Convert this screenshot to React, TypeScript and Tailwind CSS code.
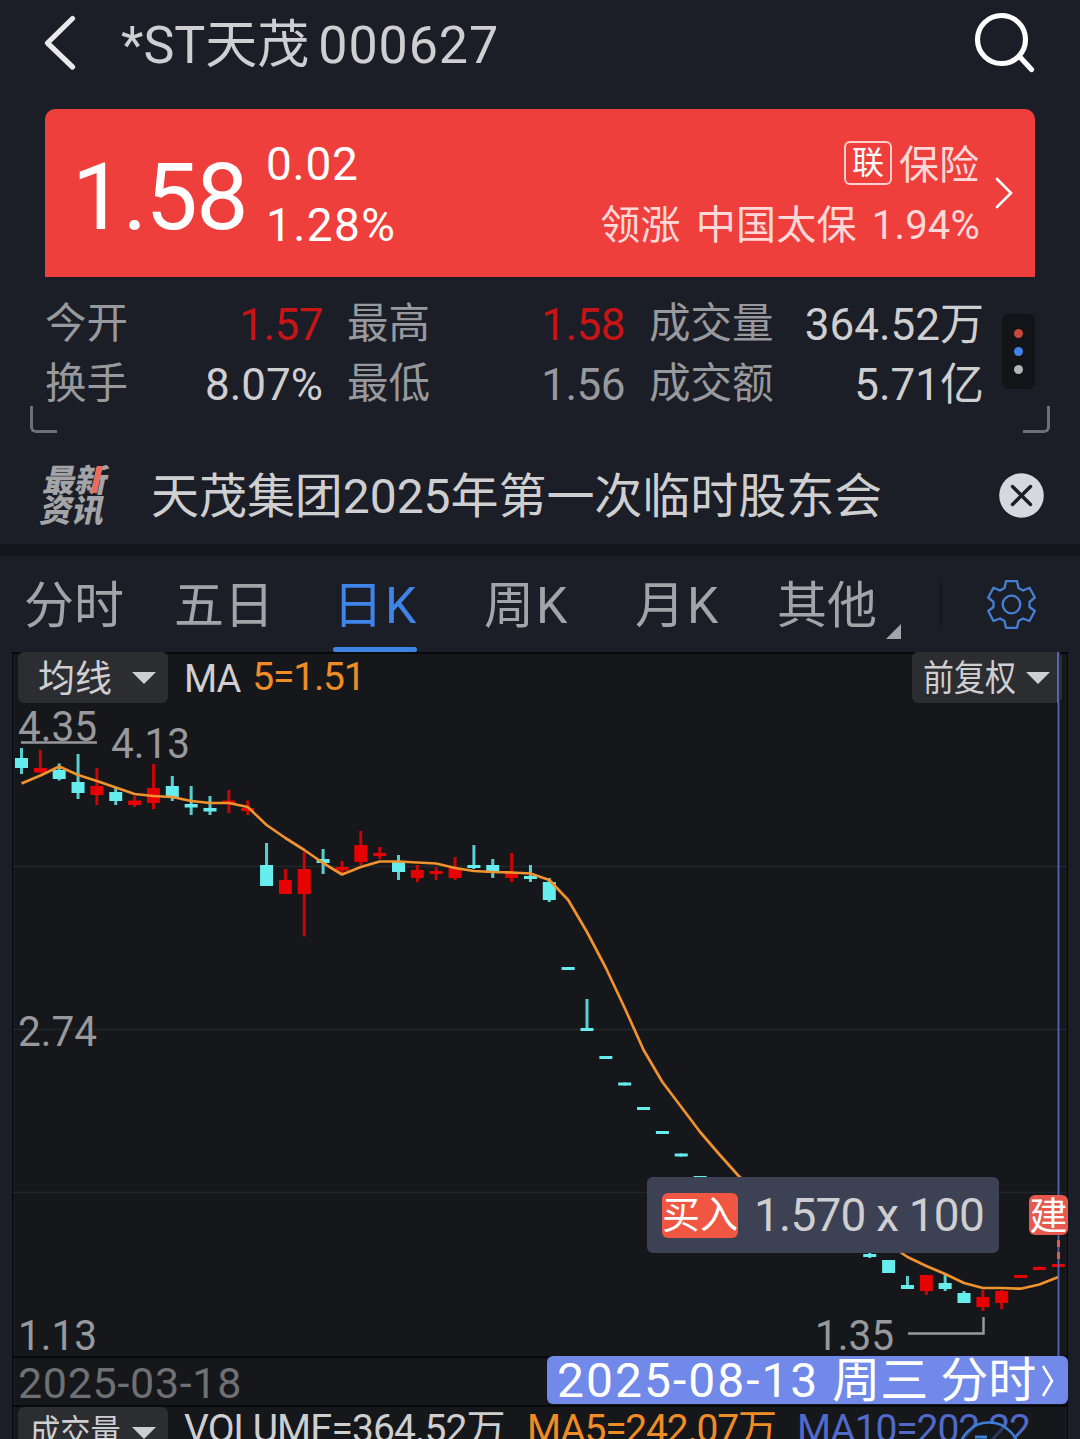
import { useState } from "react";
import type { ReactNode } from "react";

type Candle = {
  up: boolean;
  high: number;
  low: number;
  top: number;
  bottom: number;
};

const FIRST_X = 21.5;
const STEP = 18.85;

// [direction, high, low, body top, body bottom], null = covered by the trade tooltip
const RAW: ([0 | 1, number, number, number, number] | null)[] = [
  [0, 748, 774, 758, 768],
  [1, 750, 773, 768, 772.5],
  [0, 763.5, 780.5, 770, 779],
  [0, 754, 799, 782, 793],
  [1, 768, 805, 786, 795],
  [0, 788, 805, 792, 801],
  [1, 796, 807, 800.5, 805],
  [1, 764, 809, 788, 803],
  [0, 776, 801, 786, 797],
  [0, 786, 815, 804, 807.5],
  [0, 796, 815, 808, 811.5],
  [1, 790, 813, 800.5, 804],
  [1, 800.5, 815, 808, 811],
  [0, 843, 886, 865, 886],
  [1, 869, 894, 880, 894],
  [1, 852, 936.5, 869, 894],
  [0, 849, 874, 859, 863],
  [1, 861, 873, 867, 870.5],
  [1, 831, 865, 845, 862],
  [1, 847, 859, 853, 856],
  [0, 855, 880, 862, 872],
  [1, 865, 882, 870, 878],
  [1, 867, 880, 871, 874],
  [1, 857, 880, 868, 878],
  [0, 845, 869, 865, 868],
  [0, 859, 878, 865, 873],
  [1, 853, 882, 872, 878],
  [0, 865, 882, 876, 879],
  [0, 878, 902, 882, 900],
  [0, 967, 970, 967, 970],
  [0, 999, 1030, 1028, 1031],
  [0, 1056, 1059, 1056, 1059],
  [0, 1082.5, 1085.5, 1082.5, 1085.5],
  [0, 1107, 1110, 1107, 1110],
  [0, 1131, 1134, 1131, 1134],
  [0, 1153.5, 1156.5, 1153.5, 1156.5],
  [0, 1176, 1179, 1176, 1179],
  null,
  null,
  null,
  null,
  null,
  null,
  null,
  null,
  [0, 1250, 1258, 1254, 1257],
  [0, 1260, 1273, 1260, 1273],
  [0, 1276, 1289, 1285, 1289],
  [1, 1275, 1295, 1275, 1291],
  [0, 1275, 1291, 1283, 1289],
  [0, 1291, 1303, 1293, 1303],
  [1, 1290, 1311, 1297, 1307],
  [1, 1290, 1309, 1291, 1303],
  [1, 1275, 1278, 1275, 1278],
  [1, 1266.5, 1269.5, 1267, 1270],
  [1, 1264, 1267, 1264, 1267],
];

const CANDLES: (Candle | null)[] = RAW.map((row) =>
  row ? { up: row[0] === 1, high: row[1], low: row[2], top: row[3], bottom: row[4] } : null
);

const MA5 = [
  783.5, 775.5, 766.5, 775, 781, 787.5, 794, 796, 797, 801, 803, 803, 807, 825, 838, 850, 863, 874.5, 867, 861.5,
  861.5, 862.5, 863.5, 868, 871, 872, 872.5, 873.5, 880, 900, 932, 968, 1008, 1050, 1082, 1107, 1132, 1154, 1175,
  1193, 1205, 1213, 1220, 1227, 1233, 1238, 1244, 1257, 1266, 1274, 1283, 1288, 1288, 1288.7, 1284.5, 1277,
];

const PRICE_LABELS = [
  { text: "4.35", x: 18, y: 741 },
  { text: "4.13", x: 111, y: 758 },
  { text: "2.74", x: 18, y: 1046 },
  { text: "1.13", x: 18, y: 1350 },
  { text: "1.35", x: 815, y: 1350 },
];

const TABS = [
  { label: "分时", className: "w-[150px]" },
  { label: "五日", className: "w-[159px]" },
  { label: "日K", className: "w-[151px] tracking-[2px]" },
  { label: "周K", className: "w-[151px] tracking-[2px]" },
  { label: "月K", className: "w-[142px] tracking-[2px]" },
  { label: "其他", className: "w-[109px]" },
];

export default function App() {
  return (
    <div className="flex h-[1439px] w-[1080px] flex-col overflow-hidden bg-[#1b1e26] font-['Roboto','Noto_Sans_CJK_SC',sans-serif] leading-none whitespace-nowrap text-[#cfcfd1]">
      <Header />
      <QuoteCard />
      <Stats />
      <News />
      <div className="h-3 shrink-0 bg-[#15161b]" />
      <PeriodTabs />
      <div className="mx-3 flex flex-1 flex-col border-x border-[#08090c] bg-[#15171b]">
        <PriceChart />
        <DateRow />
        <VolumeRow />
      </div>
    </div>
  );
}

function Header() {
  return (
    <header className="flex h-[109px] shrink-0 items-start pt-3 pr-11 pl-11">
      <svg className="mt-[2px] h-[58px] w-[34px]" viewBox="0 0 34 58" fill="none">
        <path d="M28.500 4.500L3.500 29L28.500 53" stroke="#e9e9eb" strokeWidth="5.200" strokeLinecap="round" strokeLinejoin="round" />
      </svg>
      <h1 className="ml-[43px] flex h-16 items-center pt-[3px] text-[52px]">
        <span>*ST天茂</span>
        <span className="ml-[9px] tracking-[0.9px]">000627</span>
      </h1>
      <svg className="ml-auto h-[62px] w-[62px]" viewBox="0 0 62 62" fill="none" stroke="#fff" strokeWidth="5.200">
        <circle cx="27.500" cy="27.500" r="24" />
        <path d="M45.500 44.500L57.500 57.500" strokeLinecap="round" />
      </svg>
    </header>
  );
}

function QuoteCard() {
  return (
    <section className="mx-[45px] flex h-[168px] shrink-0 items-center rounded-t-[10px] bg-[#ef3f3d] text-white">
      <span className="ml-[27px] w-[194px] pt-2 text-[93px] tracking-[-1.6px]">1.58</span>
      <div className="flex flex-col gap-[15px] pt-[3px] text-[46px]">
        <span className="tracking-[0.7px]">0.02</span>
        <span className="tracking-[1.4px]">1.28%</span>
      </div>
      <div className="ml-auto flex flex-col items-end gap-[20px] pt-[6px] text-[40px] text-[#ffd9d8]">
        <div className="flex h-10 items-center gap-[7px]">
          <span className="-mt-[7px] flex h-11 w-12 items-center justify-center rounded-md border-2 border-[#ffd0cf] pt-px text-[32px] text-white">联</span>
          <span className="pr-px">保险</span>
        </div>
        <span className="tracking-[0.2px] [word-spacing:5px]">领涨 中国太保 1.94%</span>
      </div>
      <svg className="mr-[21px] ml-[14px] h-[34px] w-5" viewBox="0 0 20 34" fill="none">
        <path d="M3 3L17 17L3 31" stroke="#fff" strokeWidth="2.600" strokeLinecap="round" />
      </svg>
    </section>
  );
}

function Stats() {
  return (
    <section className="relative flex h-[156px] shrink-0 pt-[18px] pl-[45px]">
      <div className="grid h-[120px] grid-cols-[83px_195px_24px_83px_195px_24px_126px_209px] grid-rows-2 items-center text-[44px]">
        <StatLabel>今开</StatLabel>
        <StatValue className="tracking-[-0.5px] text-[#c81414]">1.57</StatValue>
        <i />
        <StatLabel>最高</StatLabel>
        <StatValue className="tracking-[-0.5px] text-[#c81414]">1.58</StatValue>
        <i />
        <StatLabel>成交量</StatLabel>
        <StatValue className="text-[#cfcfd1]">364.52万</StatValue>
        <StatLabel>换手</StatLabel>
        <StatValue className="text-[#cfcfd1]">8.07%</StatValue>
        <i />
        <StatLabel>最低</StatLabel>
        <StatValue className="tracking-[-0.5px] text-[#98999d]">1.56</StatValue>
        <i />
        <StatLabel>成交额</StatLabel>
        <StatValue className="text-[#cfcfd1]">5.71亿</StatValue>
      </div>
      <div className="mt-[19px] ml-[18px] flex h-[75px] w-[33px] flex-col items-center justify-center gap-[9px] rounded-md bg-[#131418]">
        <span className="size-[9px] rounded-full bg-[#c34a3c]" />
        <span className="size-[9px] rounded-full bg-[#3f84ea]" />
        <span className="size-[9px] rounded-full bg-[#b4b4b8]" />
      </div>
      <span className="absolute bottom-0 left-[30px] h-[27px] w-[27px] rounded-bl-md border-b-[3px] border-l-[3px] border-[#6e6f74]" />
      <span className="absolute right-[30px] bottom-0 h-[27px] w-[27px] rounded-br-md border-r-[3px] border-b-[3px] border-[#6e6f74]" />
    </section>
  );
}

function StatLabel({ children }: { children: ReactNode }) {
  return <span className="pb-[2px] text-[41.500px] text-[#98999d]">{children}</span>;
}

function StatValue({ className, children }: { className: string; children: ReactNode }) {
  return <span className={`justify-self-end ${className}`}>{children}</span>;
}

function News() {
  return (
    <section className="flex h-[111px] shrink-0 items-center pt-[14px] pr-9 pl-[38px]">
      <div className="relative flex w-[72px] flex-col pt-px text-[32px] font-black text-[#a3a4a7]">
        <span className="origin-bottom-left -skew-x-12 pl-[3px] leading-[30px]">最新</span>
        <span className="origin-bottom-left -skew-x-12 leading-[30px]">资讯</span>
        <span className="absolute top-px left-[56px] h-[27px] w-[6px] -skew-x-12 bg-[#ee6a5b]" />
      </div>
      <span className="ml-[41px] pt-[3px] text-[48px] tracking-[-0.05px]">天茂集团2025年第一次临时股东会</span>
      <svg className="ml-auto size-[45px]" viewBox="0 0 45 45">
        <circle cx="22.500" cy="22.500" r="22.300" fill="#d7d8dd" />
        <path d="M13.500 13.500L31.500 31.500M31.500 13.500L13.500 31.500" stroke="#1b1e26" strokeWidth="3.400" strokeLinecap="round" />
      </svg>
    </section>
  );
}

function PeriodTabs() {
  const [active, setActive] = useState("日K");

  return (
    <nav className="flex h-24 shrink-0 pl-6 text-[50px]">
      {TABS.map((tab) => (
        <button
          key={tab.label}
          type="button"
          onClick={() => setActive(tab.label)}
          className={`relative flex h-full cursor-pointer items-center pt-[3px] text-left ${tab.className} ${
            tab.label === active ? "text-[#3f84e8]" : "text-[#a3a4a7]"
          }`}
        >
          {tab.label}
          {tab.label === active ? <span className="absolute bottom-0 left-0 h-[5px] w-[84px] rounded-sm bg-[#3f84e0]" /> : null}
        </button>
      ))}
      <svg className="mt-[68px] size-[15px]" viewBox="0 0 15 15">
        <path d="M15 0V15H0Z" fill="#a3a4a7" />
      </svg>
      <span className="mt-[25px] ml-[39px] h-[46px] w-[2px] bg-[#15171b]" />
      <svg className="mt-6 ml-[45px] size-[49px]" viewBox="0 0 49 49" fill="none" stroke="#4580d2" strokeWidth="2.300" strokeLinejoin="round">
        <path d="M19 1.200H30L31.500 8L36 10.500L42.500 7.800L47.800 17.500L42.500 22V27L47.800 31L42.500 41L36 38.500L31.500 41L30 47.800H19L17.500 41L13 38.500L6.500 41L1.200 31L6.500 27V22L1.200 17.500L6.500 7.800L13 10.500L17.500 8Z" />
        <circle cx="24.500" cy="24.500" r="8.800" />
      </svg>
    </nav>
  );
}

function PriceChart() {
  const line = MA5.map((y, index) => `${(FIRST_X + index * STEP).toFixed(1)},${y}`).join(" ");

  return (
    <div className="relative h-[704px] shrink-0">
      <svg className="-mx-px h-[704px] w-[1056px] overflow-visible" viewBox="12 652 1056 704">
        <path d="M12 653H1068" stroke="#08090c" strokeWidth="2" />
        <path d="M13 866.500H1067M13 1029.500H1067M13 1192.500H1067" stroke="#22252a" strokeWidth="1.300" />
        {CANDLES.map((candle, index) => {
          if (!candle) return null;
          const x = FIRST_X + index * STEP;
          const fill = candle.up ? "#e60202" : "#66eeee";
          return (
            <g key={index} fill={fill}>
              <rect x={x - 1.5} y={candle.high} width="3" height={candle.low - candle.high} opacity="0.850" />
              <rect x={x - 6.5} y={candle.top} width="13" height={candle.bottom - candle.top} />
            </g>
          );
        })}
        <polyline points={line} fill="none" stroke="#f0922e" strokeWidth="2.700" strokeLinejoin="round" />
        <path d="M21 742.500H97" stroke="#98999c" strokeWidth="2.500" />
        <path d="M908 1333.500H983.500V1317" fill="none" stroke="#98999c" strokeWidth="2.500" />
        <path d="M1058.500 652V1356" stroke="#5266b4" strokeWidth="1.800" />
        <path d="M1058.500 1240V1247M1058.500 1252V1259" stroke="#dc5b50" strokeWidth="3" />
        {PRICE_LABELS.map((label) => (
          <text key={label.text} x={label.x} y={label.y} fill="#98999c" fontSize="43" textLength="79" lengthAdjust="spacingAndGlyphs">
            {label.text}
          </text>
        ))}
      </svg>

      <div className="absolute top-0 left-[5px] flex h-[51px] items-center">
        <Dropdown className="pl-[20px]">
          <span className="pt-[3px] text-[37px]">均线</span>
        </Dropdown>
        <span className="ml-4 pt-[3px] text-[38px] tracking-[-1px]">MA</span>
        <span className="ml-3 text-[39px] tracking-[-1.2px] text-[#f08c26]">5=1.51</span>
      </div>
      <div className="absolute top-0 right-[5px]">
        <Dropdown className="pl-[11px]">
          <span className="w-[93px] origin-left scale-x-[.86] pt-[3px] text-[36px]">前复权</span>
        </Dropdown>
      </div>
      <span className="absolute top-0 right-[8px] h-[51px] w-[2px] bg-[#5266b4]" />

      <div className="absolute top-[525px] left-[634px] flex h-[76px] w-[352px] items-center rounded-md bg-[#3d4154] pl-[15px]">
        <span className="flex h-[45px] w-[76px] items-center justify-center rounded-md bg-[#f05641] text-[38px] text-white">买入</span>
        <span className="ml-4 text-[46px] tracking-[-0.8px]">1.570 x 100</span>
      </div>
      <span className="absolute top-[543px] -right-px flex h-10 w-[39px] items-center justify-center rounded-md bg-[#e8584c] pt-px text-[38px] text-white">
        建
      </span>
    </div>
  );
}

function Dropdown({ className, children }: { className: string; children: ReactNode }) {
  return (
    <button
      type="button"
      className={`flex h-[51px] w-[150px] shrink-0 cursor-pointer items-center justify-between rounded-md bg-[#2c2d31] pr-3 ${className}`}
    >
      {children}
      <svg className="h-3 w-6 shrink-0" viewBox="0 0 24 12">
        <path d="M0 0H24L12 12Z" fill="#cfcfd1" />
      </svg>
    </button>
  );
}

function DateRow() {
  return (
    <div className="-mr-px flex h-[51px] shrink-0 justify-between border-y-2 border-[#08090c]">
      <span className="flex items-center pt-[3px] pl-[5px] text-[43px] tracking-[0.7px] text-[#6f7073]">2025-03-18</span>
      <button type="button" className="-mt-[2px] flex h-12 w-[521px] cursor-pointer items-center rounded-md bg-[#7189e9] pt-[2px] pl-[10px] text-[48px] text-white">
        <span className="tracking-[2px]">2025-08-13</span>
        <span className="ml-[13px]">周三 分时</span>
        <svg className="ml-[5px] h-8 w-[14px]" viewBox="0 0 14 32" fill="none">
          <path d="M2 1L11 16L2 31" stroke="#fff" strokeWidth="2.500" />
        </svg>
      </button>
    </div>
  );
}

function VolumeRow() {
  return (
    <div className="relative flex h-8 overflow-hidden">
      <div className="flex h-[51px] shrink-0 items-center pl-[5px] text-[39px]">
        <Dropdown className="pl-[12px]">
          <span className="w-[93px] origin-left scale-x-[.84] pt-[3px] text-[36px]">成交量</span>
        </Dropdown>
        <span className="ml-4 w-[343px] pb-[7px] tracking-[-0.9px]">VOLUME=364.52万</span>
        <span className="w-[270px] pb-[7px] tracking-[-1.2px] text-[#f08c26]">MA5=242.07万</span>
        <span className="pb-[7px] tracking-[-1.1px] text-[#5169c9]">MA10=202.22</span>
      </div>
      <svg className="absolute top-[14px] left-[944px] h-[18px] w-[66px]" viewBox="0 0 66 18" fill="none" stroke="#3d7fd8">
        <circle cx="32" cy="31.500" r="30" strokeWidth="2.500" fill="#15171b" fillOpacity="0.600" />
        <path d="M18 16H30" strokeWidth="3" />
      </svg>
    </div>
  );
}
